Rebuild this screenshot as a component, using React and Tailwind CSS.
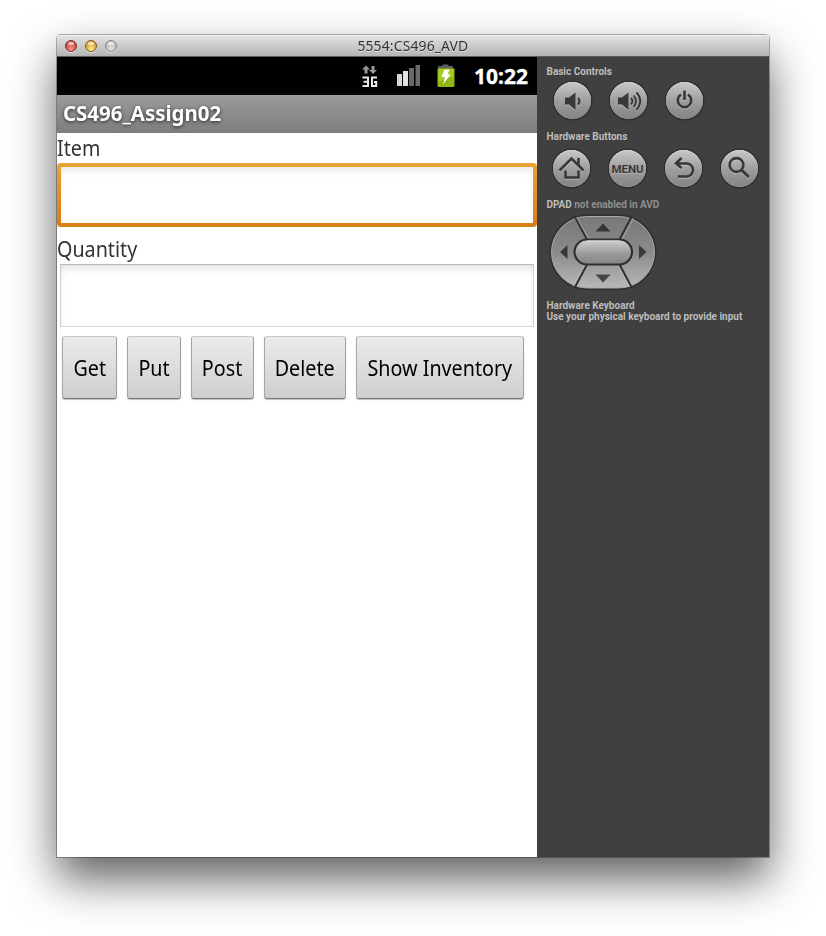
import React from 'react';

function Light({ tone }) {
  return (
    <span className={`block h-3 w-3 rounded-full border shadow-[0_1px_0_rgba(255,255,255,0.55)] ${tone}`}>
      <span className="mx-auto mt-px block h-[3px] w-[6px] rounded-full bg-white/60" />
    </span>
  );
}

function TitleBar() {
  return (
    <div className="relative flex h-[22px] items-center rounded-t-[4px] border-b border-[#5c5c5c] bg-gradient-to-b from-[#e4e4e4] to-[#b4b4b4] pl-2 shadow-[inset_0_1px_0_#f4f4f4]">
      <div className="flex gap-2">
        <Light tone="border-[#7d2f2b] bg-radial-[at_50%_90%] from-[#f9978a] to-[#b8342e]" />
        <Light tone="border-[#7c571c] bg-radial-[at_50%_90%] from-[#ffe98c] to-[#cf902a]" />
        <Light tone="border-[#858585] bg-radial-[at_50%_90%] from-[#e0e0e0] to-[#b6b6b6]" />
      </div>
      <div className="absolute inset-x-0 top-0 flex justify-center">
        <span className="block scale-x-[1.03] font-['Noto_Sans'] text-[13.5px] leading-[23px] tracking-[0.15px] whitespace-nowrap text-[#333] [text-shadow:0_1px_0_rgba(255,255,255,0.5)]">5554:CS496_AVD</span>
      </div>
    </div>
  );
}

function StatusBar() {
  return (
    <div className="flex h-[38px] items-center bg-black pl-[303px] text-white">
      <svg width="100" height="38" viewBox="0 0 100 38" className="shrink-0">
        <path d="M6 8.500l4 4H7.500v4h-3v-4H2zM13 17l-4-4h2.500V9h3v4H17z" fill="#979797" />
        <path d="M2.500 20.500H8v8.500H2.500M3.500 24.700H8M17 20.500h-5V29h4.200v-4h-2.200" fill="none" stroke="#e8e8e8" strokeWidth="2" />
        <path d="M37 17h5v12h-5z" fill="#d5d5d5" />
        <path d="M43 14h5v15h-5z" fill="#e2e2e2" />
        <path d="M49 11h5v18h-5zM55.500 8h4.500v21h-4.500z" fill="#6a6a6a" />
        <path d="M78 11V10q0-1 1-1h3.500V7.500h6V9H92q1 0 1 1v1z" fill="#606060" />
        <path d="M77.500 11.500h17v17q0 1.500-1.500 1.500H79q-1.500 0-1.500-1.500z" fill="#8fb713" />
        <path d="M78.500 11.500h15v8l-15 5z" fill="#a4cb26" />
        <path d="M84.500 12.500h5l-2 5h3l-7.500 10 2-7.500h-3.500z" fill="#fff" />
      </svg>
      <span className="ml-[14px] block origin-left text-[21px] leading-[38px] font-bold whitespace-nowrap [-webkit-text-stroke:0.3px_white]">10:22</span>
    </div>
  );
}

function AndroidButton({ label, width }) {
  return (
    <button className={`flex h-[63px] shrink-0 items-center justify-center rounded-[3px] border border-t-[#c8c8c8] border-r-[#a0a0a0] border-b-[#777] border-l-[#a6a6a6] bg-gradient-to-b from-[#ebebeb] to-[#cecece] text-black shadow-[0_1px_1px_rgba(0,0,0,0.25)] ${width}`}>
      <span className="block scale-x-[0.917] text-[21.5px] leading-[30px] whitespace-nowrap">{label}</span>
    </button>
  );
}

function Phone() {
  return (
    <div className="flex w-[480px] shrink-0 flex-col bg-white font-['Noto_Sans']">
      <StatusBar />
      <div className="flex h-[38px] items-start bg-gradient-to-b from-[#9b9b9b] to-[#7d7d7d] pl-[6px]">
        <span className="block origin-left scale-x-[0.95] text-[21.5px] leading-[36px] font-bold whitespace-nowrap text-white [text-shadow:0_1px_4px_rgba(0,0,0,0.75)]">CS496_Assign02</span>
      </div>
      <label className="block h-[30px] origin-left scale-x-[0.917] text-[21.5px] leading-[30px] text-[#333]">Item</label>
      <div className="h-16 rounded-[4px] bg-gradient-to-b from-[#e8a334] to-[#d77e14] p-1">
        <div className="h-full bg-white shadow-[inset_0_5px_8px_-2px_rgba(0,0,0,0.1)]" />
      </div>
      <label className="mt-[7px] block h-[30px] origin-left scale-x-[0.917] text-[21.5px] leading-[30px] text-[#333]">Quantity</label>
      <div className="mx-[3px] h-[63px] border border-t-[#b8b8b8] border-r-[#d2d2d2] border-b-[#d8d8d8] border-l-[#cecece] bg-white shadow-[inset_0_6px_10px_-3px_rgba(0,0,0,0.13)]" />
      <div className="mt-[9px] flex gap-[10px] pl-[5px]">
        <AndroidButton label="Get" width="w-[55px]" />
        <AndroidButton label="Put" width="w-[54px]" />
        <AndroidButton label="Post" width="w-[63px]" />
        <AndroidButton label="Delete" width="w-[82px]" />
        <AndroidButton label="Show Inventory" width="w-[168px]" />
      </div>
    </div>
  );
}

function RoundButton({ children }) {
  return (
    <div className="flex h-[37px] w-[37px] shrink-0 items-center justify-center rounded-full bg-gradient-to-b from-[#c8c8c8] via-[#a0a0a0] via-50% to-[#828282] shadow-[0_0_0_1.5px_#303030,inset_0_1px_0_#d2d2d2,inset_0_-1px_0_#929292]">
      {children}
    </div>
  );
}

function Glyph({ children }) {
  return (
    <svg width="37" height="37" viewBox="0 0 37 37" fill="none" stroke="#383838" strokeWidth="2.6" className="drop-shadow-[0_1px_0_rgba(255,255,255,0.3)]">
      {children}
    </svg>
  );
}

function Dpad() {
  return (
    <svg width="108" height="76" viewBox="0 0 108 76" className="mt-[3px] ml-[2.5px] block">
      <defs>
        <linearGradient id="pad" x1="0" y1="0" x2="0" y2="1">
          <stop offset="0" stopColor="#787878" />
          <stop offset="0.5" stopColor="#8b8b8b" />
          <stop offset="1" stopColor="#b8b8b8" />
        </linearGradient>
        <linearGradient id="center" x1="0" y1="0" x2="0" y2="1">
          <stop offset="0" stopColor="#d2d2d2" />
          <stop offset="0.6" stopColor="#989898" />
          <stop offset="1" stopColor="#858585" />
        </linearGradient>
      </defs>
      <rect x="0.500" y="0.500" width="107" height="75.500" rx="37.500" fill="#303030" />
      <rect x="2.500" y="2.500" width="103" height="71.500" rx="35.750" fill="url(#pad)" stroke="#aaa" strokeWidth="1" />
      <path d="M25.500 2L38 25.500M83 2L70.500 25.500M25.500 74L38 50.500M83 74L70.500 50.500" stroke="#303030" strokeWidth="2" />
      <path d="M27.500 3L39.500 24.500M84.500 4L73 25M24 72.500L36 51M81 73L69 52" stroke="#bbb" strokeWidth="0.7" />
      <rect x="25.500" y="25.500" width="57.500" height="25" rx="12.500" fill="url(#center)" stroke="#303030" strokeWidth="2.200" />
      <path d="M38 27h33" stroke="#ddd" strokeWidth="1" />
      <path d="M46.500 17.500L54 9.500l7.500 8z" fill="#353535" />
      <path d="M46.500 60.500h15l-7.500 8z" fill="#454545" />
      <path d="M18.500 31v14L11 38z" fill="#393939" />
      <path d="M90 31v14l7.500-7z" fill="#393939" />
    </svg>
  );
}

function Controls() {
  return (
    <div className="flex min-w-0 flex-1 flex-col bg-[#404040] pl-[9px] font-[Roboto] text-[10px] leading-[12px] font-bold text-[#bdbdbd]">
      <div className="mt-[9px] pl-[0.5px]">Basic Controls</div>
      <div className="mt-[4px] flex gap-[19px] pl-[8px]">
        <RoundButton>
          <Glyph>
            <path d="M11 15.500h4l6.500-5v17.500l-6.500-5.500h-4z" fill="#383838" stroke="none" />
            <path d="M24 16q2.800 3 0 6.500" strokeWidth="2.200" />
          </Glyph>
        </RoundButton>
        <RoundButton>
          <Glyph>
            <path d="M8 15.500h4l6.500-5v17.500l-6.500-5.500H8z" fill="#383838" stroke="none" />
            <path d="M21 16q2.800 3 0 6.500M23.700 13.500q4.500 5.500 0 11.500M26.500 10.500q7.500 8.500 0 17.500" strokeWidth="1.900" />
          </Glyph>
        </RoundButton>
        <RoundButton>
          <Glyph>
            <path d="M15 12.700a6.700 6.700 0 1 0 7 0M18.500 8.500v9.500" />
          </Glyph>
        </RoundButton>
      </div>
      <div className="mt-[12px] pl-[0.5px]">Hardware Buttons</div>
      <div className="mt-[7px] flex gap-[19px] pl-[7px]">
        <RoundButton>
          <Glyph>
            <path d="M6.500 20.500L18.500 8.500l12 12M25.500 8v7M12.500 20.500v7h13v-7" strokeWidth="2.600" />
          </Glyph>
        </RoundButton>
        <RoundButton>
          <span className="block font-[Roboto] text-[11.5px] leading-[14px] font-bold text-[#383838] [text-shadow:0_1px_0_rgba(255,255,255,0.3)]">MENU</span>
        </RoundButton>
        <RoundButton>
          <Glyph>
            <path d="M16.500 8l-5.500 5.500 5.500 4.500M11 13.500h10.500a6.500 6.500 0 0 1 0 13H13" />
          </Glyph>
        </RoundButton>
        <RoundButton>
          <Glyph>
            <circle cx="15.500" cy="15" r="6.900" />
            <path d="M20.500 20l7.300 7" strokeWidth="3" />
          </Glyph>
        </RoundButton>
      </div>
      <div className="mt-[12px] pl-[0.5px] tracking-[-0.02px]">DPAD <span className="text-[#8e8e8e]">not enabled in AVD</span></div>
      <Dpad />
      <div className="mt-[10px] pl-[0.5px] whitespace-nowrap">
        <div className="leading-[11px]">Hardware Keyboard</div>
        <div className="leading-[11px]">Use your physical keyboard to provide input</div>
      </div>
    </div>
  );
}

export default function App() {
  return (
    <div className="h-[936px] w-[826px] overflow-hidden bg-white pt-[35px] pl-[57px]">
      <div className="flex h-[822px] w-[712px] flex-col rounded-t-[4px] shadow-[0_0_0_1px_rgba(0,0,0,0.3),0_22px_46px_rgba(0,0,0,0.63)]">
        <TitleBar />
        <div className="flex min-h-0 flex-1">
          <Phone />
          <Controls />
        </div>
      </div>
    </div>
  );
}
